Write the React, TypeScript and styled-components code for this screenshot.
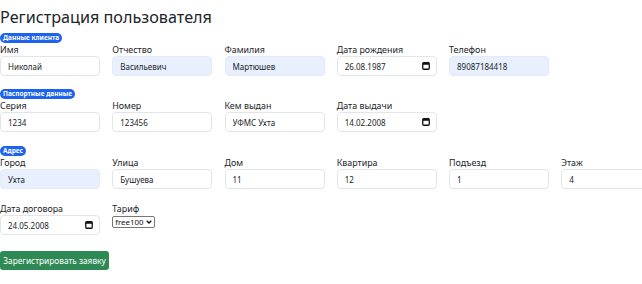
import React from "react";
import styled, { createGlobalStyle } from "styled-components";

const Global = createGlobalStyle`
  html, body { margin: 0; padding: 0; background: #fff; overflow: hidden; }
  body { font-family: "Noto Sans", "Open Sans", sans-serif; color: #212529; }
`;

const Page = styled.div`
  width: 642px;
  padding: 6px 0 0 0;
  box-sizing: border-box;
`;

const Title = styled.h1`
  margin: 0 0 5px 0;
  font-size: 16.2px;
  line-height: 22px;
  font-weight: 400;
`;

const Section = styled.section<{ $gap?: number }>`
  margin-bottom: ${(p) => p.$gap ?? 13}px;
`;

const Badge = styled.div`
  width: fit-content;
  height: 10px;
  line-height: 10px;
  padding: 0 3px;
  border-radius: 5px;
  background: #1d63ee;
  color: #fff;
  font-size: 6.5px;
  font-weight: 700;
`;

const Row = styled.div`
  display: flex;
  gap: 12.25px;
  width: 700px;
`;

const Field = styled.div`
  display: flex;
  flex-direction: column;
  align-items: flex-start;
  width: 100px;
  flex: none;
`;

const Label = styled.label`
  font-size: 8.9px;
  line-height: 13px;
  height: 13px;
  white-space: nowrap;
`;

const Input = styled.input<{ $auto?: boolean }>`
  box-sizing: border-box;
  width: 100px;
  height: 20px;
  padding: 0 0 0 7px;
  border: 1px solid ${(p) => (p.$auto ? "#e3ebf8" : "#e2e5e9")};
  border-radius: 4px;
  background: ${(p) => (p.$auto ? "#e8f0fe" : "#fff")};
  font-family: inherit;
  font-size: 8px;
  color: #212529;
  outline: none;
`;

const DateBox = styled.div`
  box-sizing: border-box;
  width: 100px;
  height: 20px;
  padding: 0 6px 0 7px;
  border: 1px solid #e2e5e9;
  border-radius: 4px;
  display: flex;
  align-items: center;
  justify-content: space-between;
`;

const DateInput = styled.input`
  border: none;
  padding: 0;
  margin: 0;
  width: 70px;
  font-family: inherit;
  font-size: 8px;
  color: #212529;
  background: transparent;
  outline: none;
`;

const SelectBox = styled.div`
  box-sizing: border-box;
  display: flex;
  align-items: center;
  gap: 1px;
  height: 12px;
  margin-top: 1px;
  padding: 0 2px 0 2px;
  border: 1px solid #767676;
  border-radius: 2px;
  background: #fff;
`;

const Select = styled.select`
  appearance: none;
  -webkit-appearance: none;
  border: none;
  padding: 0;
  margin: 0;
  width: 30px;
  height: 10px;
  font-family: inherit;
  font-size: 7.9px;
  line-height: 10px;
  background: transparent;
  color: #111;
  outline: none;
`;

const Button = styled.button`
  box-sizing: border-box;
  height: 19px;
  width: 109px;
  padding: 0;
  border: none;
  border-radius: 3px;
  background: #2f8955;
  color: #fff;
  font-family: inherit;
  font-size: 8.3px;
  line-height: 19px;
  white-space: nowrap;
`;

const Cal = () => (
  <svg width="8" height="8" viewBox="0 0 8 8">
    <rect x="0.75" y="0.75" width="6.5" height="6.5" rx="1" fill="none" stroke="#111" strokeWidth="1.3" />
    <rect x="0.75" y="0.75" width="6.5" height="2" fill="#111" />
  </svg>
);

const Chevron = () => (
  <svg width="6" height="4" viewBox="0 0 6 4">
    <path d="M0.7 0.7 L3 3 L5.3 0.7" fill="none" stroke="#111" strokeWidth="1.3" />
  </svg>
);

type F = { label: string; value: string; auto?: boolean; date?: boolean };

const FieldView = ({ f }: { f: F }) => (
  <Field>
    <Label>{f.label}</Label>
    {f.date ? (
      <DateBox>
        <DateInput readOnly value={f.value} />
        <Cal />
      </DateBox>
    ) : (
      <Input readOnly value={f.value} $auto={f.auto} />
    )}
  </Field>
);

const client: F[] = [
  { label: "Имя", value: "Николай" },
  { label: "Отчество", value: "Васильевич", auto: true },
  { label: "Фамилия", value: "Мартюшев", auto: true },
  { label: "Дата рождения", value: "26.08.1987", date: true },
  { label: "Телефон", value: "89087184418", auto: true },
];

const passport: F[] = [
  { label: "Серия", value: "1234" },
  { label: "Номер", value: "123456" },
  { label: "Кем выдан", value: "УФМС Ухта" },
  { label: "Дата выдачи", value: "14.02.2008", date: true },
];

const address: F[] = [
  { label: "Город", value: "Ухта", auto: true },
  { label: "Улица", value: "Бушуева" },
  { label: "Дом", value: "11" },
  { label: "Квартира", value: "12" },
  { label: "Подъезд", value: "1" },
  { label: "Этаж", value: "4" },
];

export default function App() {
  return (
    <Page>
      <Global />
      <Title>Регистрация пользователя</Title>
      <Section>
        <Badge>Данные клиента</Badge>
        <Row>{client.map((f) => <FieldView key={f.label} f={f} />)}</Row>
      </Section>
      <Section $gap={14}>
        <Badge>Паспортные данные</Badge>
        <Row>{passport.map((f) => <FieldView key={f.label} f={f} />)}</Row>
      </Section>
      <Section>
        <Badge>Адрес</Badge>
        <Row>{address.map((f) => <FieldView key={f.label} f={f} />)}</Row>
      </Section>
      <Section $gap={12}>
        <Row>
          <FieldView f={{ label: "Дата договора", value: "24.05.2008", date: true }} />
          <Field>
            <Label>Тариф</Label>
            <SelectBox>
              <Select defaultValue="free100">
                <option value="free100">free100</option>
              </Select>
              <Chevron />
            </SelectBox>
          </Field>
        </Row>
      </Section>
      <Button>Зарегистрировать заявку</Button>
    </Page>
  );
}
